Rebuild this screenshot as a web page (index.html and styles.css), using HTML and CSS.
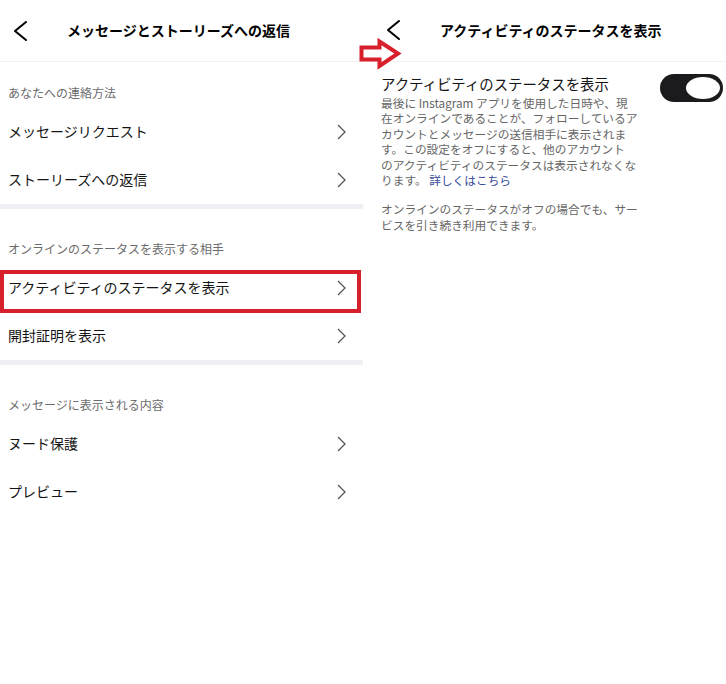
FILE: index.html
```html
<!DOCTYPE html>
<html lang="ja">
<head>
<meta charset="utf-8">
<title>設定</title>
<link rel="stylesheet" href="styles.css">
</head>
<body>
<div class="page">
  <div class="panel panel-left">
    <div class="header">
      <svg class="back" width="20" height="22" viewBox="0 0 20 22"><path d="M16 3 L5 12 L16 21" fill="none" stroke="#000" stroke-width="2" stroke-linecap="round" stroke-linejoin="round"/></svg>
      <div class="title">メッセージとストーリーズへの返信</div>
    </div>

    <div class="section-label first">あなたへの連絡方法</div>
    <div class="row"><span>メッセージリクエスト</span><svg class="chev" width="10" height="16" viewBox="0 0 10 16"><path d="M2 1 L9 8 L2 15" fill="none" stroke="#555" stroke-width="1.3"/></svg></div>
    <div class="row"><span>ストーリーズへの返信</span><svg class="chev" width="10" height="16" viewBox="0 0 10 16"><path d="M2 1 L9 8 L2 15" fill="none" stroke="#555" stroke-width="1.3"/></svg></div>
    <div class="band"></div>

    <div class="section-label">オンラインのステータスを表示する相手</div>
    <div class="row highlighted"><span>アクティビティのステータスを表示</span><svg class="chev" width="10" height="16" viewBox="0 0 10 16"><path d="M2 1 L9 8 L2 15" fill="none" stroke="#555" stroke-width="1.3"/></svg><div class="redbox"></div></div>
    <div class="row"><span>開封証明を表示</span><svg class="chev" width="10" height="16" viewBox="0 0 10 16"><path d="M2 1 L9 8 L2 15" fill="none" stroke="#555" stroke-width="1.3"/></svg></div>
    <div class="band"></div>

    <div class="section-label">メッセージに表示される内容</div>
    <div class="row"><span>ヌード保護</span><svg class="chev" width="10" height="16" viewBox="0 0 10 16"><path d="M2 1 L9 8 L2 15" fill="none" stroke="#555" stroke-width="1.3"/></svg></div>
    <div class="row"><span>プレビュー</span><svg class="chev" width="10" height="16" viewBox="0 0 10 16"><path d="M2 1 L9 8 L2 15" fill="none" stroke="#555" stroke-width="1.3"/></svg></div>
  </div>

  <div class="panel panel-right">
    <div class="header">
      <svg class="back" width="20" height="22" viewBox="0 0 20 22"><path d="M16 2 L5 11 L16 20" fill="none" stroke="#000" stroke-width="2" stroke-linecap="round" stroke-linejoin="round"/></svg>
      <div class="title">アクティビティのステータスを表示</div>
    </div>
    <div class="content">
      <div class="setting">
        <div class="setting-text">
          <div class="setting-title">アクティビティのステータスを表示</div>
          <p class="desc">最後に Instagram アプリを使用した日時や、現<br>在オンラインであることが、フォローしているア<br>カウントとメッセージの送信相手に表示されま<br>す。この設定をオフにすると、他のアカウント<br>のアクティビティのステータスは表示されなくな<br>ります。 <span class="link">詳しくはこちら</span></p>
        </div>
        <svg class="toggle" width="63" height="28" viewBox="0 0 63 28"><rect x="0" y="0" width="63" height="28" rx="14" fill="#1b1b1d"/><ellipse cx="43" cy="14" rx="17" ry="11" fill="#fff"/></svg>
      </div>
      <p class="desc note">オンラインのステータスがオフの場合でも、サー<br>ビスを引き続き利用できます。</p>
    </div>
  </div>

  <svg class="arrow" width="44" height="32" viewBox="0 0 44 32"><polygon points="3.5,9.5 21.5,9.5 21.5,3.5 40,15.5 21.5,28 21.5,21.5 3.5,21.5" fill="#fff" stroke="#d8202c" stroke-width="4" stroke-linejoin="miter"/></svg>
</div>
</body>
</html>
```

FILE: styles.css
```css
* { box-sizing: border-box; }
html, body { margin: 0; padding: 0; background: #fff; }
body {
  font-family: "Noto Sans CJK JP", "Noto Sans", sans-serif;
  color: #141414;
  width: 726px;
  height: 684px;
  overflow: hidden;
}
.page {
  position: relative;
  display: flex;
  width: 726px;
  height: 684px;
}
.panel-left { width: 365px; flex: none; }
.panel-right { flex: 1; }

.header {
  height: 62px;
  display: flex;
  align-items: center;
  padding-left: 10px;
  border-bottom: 1px solid #f1f1f1;
  padding-bottom: 2px;
}
.panel-right .header { padding-left: 18px; }
.back { flex: none; display: block; }
.title {
  margin-left: 37px;
  font-size: 14px;
  font-weight: 700;
  color: #000;
  line-height: 18px;
}

.section-label {
  font-size: 12px;
  line-height: 16px;
  color: #6c6c6c;
  padding: 32px 8px 7px;
}
.section-label.first { padding: 23px 8px 7px; }

.row {
  position: relative;
  height: 48px;
  display: flex;
  align-items: center;
  justify-content: space-between;
  padding: 0 19px 0 8px;
  font-size: 14px;
  line-height: 18px;
  color: #141414;
}
.row span { margin-top: -3px; }
.chev { display: block; flex: none; }

.redbox {
  position: absolute;
  left: 0;
  top: 6px;
  width: 361px;
  height: 43px;
  border: 4px solid #d8202c;
}

.band {
  height: 5px;
  width: 363px;
  background: #eef0f3;
}

.content { padding: 12px 3px 0 16px; }
.setting {
  display: flex;
  align-items: flex-start;
  justify-content: space-between;
}
.setting-text { flex: 1; padding-top: 0; }
.setting-title {
  font-size: 14.4px;
  line-height: 19.5px;
  margin-bottom: 1.5px;
  color: #141414;
}
.desc {
  margin: 0;
  font-size: 11.7px;
  line-height: 15.4px;
  color: #666;
  white-space: nowrap;
}
.link { color: #34499a; }
.toggle { flex: none; display: block; }
.note { margin-top: 14px; }

.arrow {
  position: absolute;
  left: 358px;
  top: 38px;
}
```
